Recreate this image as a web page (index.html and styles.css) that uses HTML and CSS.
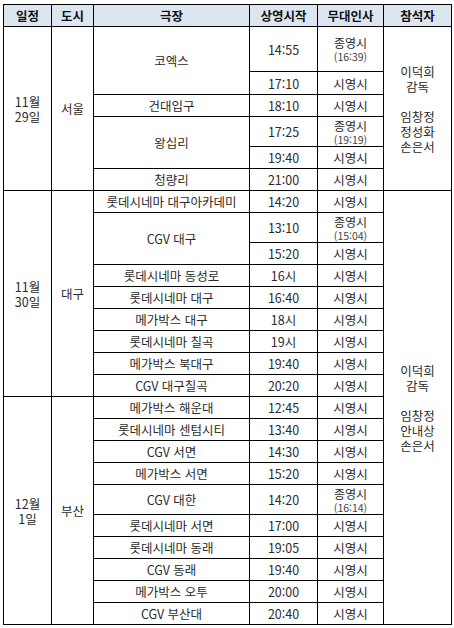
FILE: index.html
```html
<!DOCTYPE html>
<html lang="ko">
<head>
<meta charset="utf-8">
<title>무대인사 일정</title>
<link rel="stylesheet" href="styles.css">
</head>
<body>
<table class="sched">
  <colgroup>
    <col class="c-date"><col class="c-city"><col class="c-theater"><col class="c-time"><col class="c-greet"><col class="c-guest">
  </colgroup>
  <thead>
    <tr class="r22 head"><th>일정</th><th>도시</th><th>극장</th><th>상영시작</th><th>무대인사</th><th>참석자</th></tr>
  </thead>
  <tbody>
    <tr class="r45">
      <td rowspan="6" class="date">11월<br>29일</td>
      <td rowspan="6">서울</td>
      <td rowspan="2">코엑스</td>
      <td>14:55</td>
      <td><span class="g-main">종영시</span><span class="g-sub">(16:39)</span></td>
      <td rowspan="6" class="guest">이덕희<br>감독<br><br>임창정<br>정성화<br>손은서</td>
    </tr>
    <tr class="r23"><td>17:10</td><td>시영시</td></tr>
    <tr class="r22"><td>건대입구</td><td>18:10</td><td>시영시</td></tr>
    <tr class="r30"><td rowspan="2">왕십리</td><td>17:25</td><td><span class="g-main">종영시</span><span class="g-sub">(19:19)</span></td></tr>
    <tr class="r22"><td>19:40</td><td>시영시</td></tr>
    <tr class="r22"><td>청량리</td><td>21:00</td><td>시영시</td></tr>

    <tr class="r22">
      <td rowspan="9" class="date">11월<br>30일</td>
      <td rowspan="9">대구</td>
      <td>롯데시네마 대구아카데미</td>
      <td>14:20</td>
      <td>시영시</td>
      <td rowspan="19" class="guest">이덕희<br>감독<br><br>임창정<br>안내상<br>손은서</td>
    </tr>
    <tr class="r30"><td rowspan="2">CGV 대구</td><td>13:10</td><td><span class="g-main">종영시</span><span class="g-sub">(15:04)</span></td></tr>
    <tr class="r22"><td>15:20</td><td>시영시</td></tr>
    <tr class="r22"><td>롯데시네마 동성로</td><td>16시</td><td>시영시</td></tr>
    <tr class="r22"><td>롯데시네마 대구</td><td>16:40</td><td>시영시</td></tr>
    <tr class="r22"><td>메가박스 대구</td><td>18시</td><td>시영시</td></tr>
    <tr class="r22"><td>롯데시네마 칠곡</td><td>19시</td><td>시영시</td></tr>
    <tr class="r22"><td>메가박스 북대구</td><td>19:40</td><td>시영시</td></tr>
    <tr class="r22"><td>CGV 대구칠곡</td><td>20:20</td><td>시영시</td></tr>

    <tr class="r22">
      <td rowspan="10" class="date">12월<br>1일</td>
      <td rowspan="10">부산</td>
      <td>메가박스 해운대</td>
      <td>12:45</td>
      <td>시영시</td>
    </tr>
    <tr class="r22"><td>롯데시네마 센텀시티</td><td>13:40</td><td>시영시</td></tr>
    <tr class="r22"><td>CGV 서면</td><td>14:30</td><td>시영시</td></tr>
    <tr class="r22"><td>메가박스 서면</td><td>15:20</td><td>시영시</td></tr>
    <tr class="r30"><td>CGV 대한</td><td>14:20</td><td><span class="g-main">종영시</span><span class="g-sub">(16:14)</span></td></tr>
    <tr class="r22"><td>롯데시네마 서면</td><td>17:00</td><td>시영시</td></tr>
    <tr class="r22"><td>롯데시네마 동래</td><td>19:05</td><td>시영시</td></tr>
    <tr class="r22"><td>CGV 동래</td><td>19:40</td><td>시영시</td></tr>
    <tr class="r22"><td>메가박스 오투</td><td>20:00</td><td>시영시</td></tr>
    <tr class="r22"><td>CGV 부산대</td><td>20:40</td><td>시영시</td></tr>
  </tbody>
</table>
</body>
</html>
```

FILE: styles.css
```css
html, body {
  margin: 0;
  padding: 0;
  background: #fff;
}
body {
  padding: 4px 0 0 3px;
  font-family: "Noto Sans CJK KR", "Noto Sans", sans-serif;
}
.sched {
  border-collapse: collapse;
  table-layout: fixed;
  width: 448px;
  font-size: 12.5px;
  color: #2b2b2b;
}
.sched th,
.sched td {
  border: 1px solid #000;
  padding: 0;
  text-align: center;
  vertical-align: middle;
  line-height: 15px;
  white-space: nowrap;
  overflow: hidden;
}
.sched th {
  background: #dce6f1;
  font-weight: bold;
  color: #111;
}
.c-date { width: 48px; }
.c-city { width: 42px; }
.c-theater { width: 156px; }
.c-time { width: 68px; }
.c-greet { width: 66px; }
.c-guest { width: 68px; }

.r22 { height: 22px; }
.r23 { height: 23px; }
.r30 { height: 30px; }
.r45 { height: 45px; }

.g-main {
  display: block;
  font-size: 12px;
  line-height: 15px;
}
.g-sub {
  display: block;
  font-size: 10.5px;
  line-height: 13px;
  color: #444;
}
.date {
  line-height: 19px;
}
.guest {
  line-height: 16px;
}
```
